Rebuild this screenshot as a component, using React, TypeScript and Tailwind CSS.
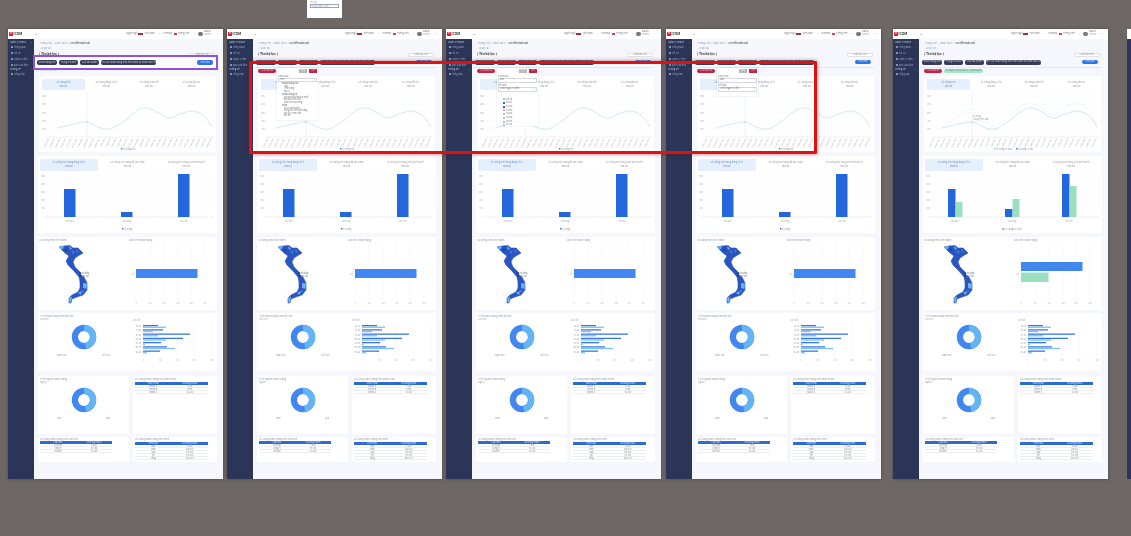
import React from "react";

type FrameKind = "outline" | "list" | "checks" | "selects" | "compare";

const dates = Array.from({ length: 30 }, (_, i) => `${String(i + 1).padStart(2, "0")}/06/2024`);

function smooth(pts: number[][]) {
  let d = `M${pts[0][0]} ${pts[0][1]}`;
  for (let i = 0; i < pts.length - 1; i++) {
    const p0 = pts[Math.max(0, i - 1)];
    const p1 = pts[i];
    const p2 = pts[i + 1];
    const p3 = pts[Math.min(pts.length - 1, i + 2)];
    d += ` C${p1[0] + (p2[0] - p0[0]) / 6} ${p1[1] + (p2[1] - p0[1]) / 6} ${p2[0] - (p3[0] - p1[0]) / 6} ${p2[1] - (p3[1] - p1[1]) / 6} ${p2[0]} ${p2[1]}`;
  }
  return d;
}

const lineA = [[57, 128], [72, 124.5], [87, 122], [98, 127], [110, 129], [124, 121], [140, 109], [152, 109.5], [168, 118], [180, 114], [193, 111], [204, 116], [212, 127]];
const lineB = [[57, 128], [72, 117], [87, 110], [98, 120], [110, 126], [124, 116], [140, 104], [152, 105], [168, 115], [180, 107], [193, 103], [204, 110], [212, 126]];

function Chip({ label, w, color = "dark" }: { label: string; w: number; color?: "dark" | "red" | "green" }) {
  const cls =
    color === "dark"
      ? "bg-[#363c56] text-[#c9cedb] h-[5px]"
      : color === "red"
        ? "bg-[#c4213f] text-[#f3c6cf] h-[4px]"
        : "bg-[#a6e4c6] text-[#5a8a78] h-[4px]";
  return (
    <span style={{ width: w }} className={`flex items-center justify-center overflow-hidden whitespace-nowrap rounded-[2px] text-[2.2px] ${cls}`}>
      {label}
    </span>
  );
}

function Header() {
  return (
    <div className="flex h-[10px] shrink-0 items-center bg-white pl-[1px] pr-[5px] text-[2.4px] text-[#777]">
      <span className="flex h-[4px] w-[4px] items-center justify-center rounded-[0.5px] bg-[#d8203c] text-[2.5px] font-bold text-white">V</span>
      <span className="ml-[0.5px] text-[3.2px] font-bold text-[#444]">ICOM</span>
      <span className="ml-[13px] text-[3px]">≡</span>
      <span className="ml-auto">Ngôn ngữ</span>
      <span className="ml-[1px] h-[2.5px] w-[5px] bg-[#a02a4e]" />
      <span className="ml-[1px]">Việt Nam</span>
      <span className="ml-[4px]">⌄</span>
      <span className="ml-[3px]">Internal</span>
      <span className="ml-[2px] h-[2.5px] w-[3px] bg-[#d8405a]" />
      <span className="ml-[1px]">Tiếng Việt</span>
      <span className="ml-[4px]">⌄</span>
      <span className="ml-[3px] h-[4.5px] w-[4.5px] rounded-full bg-[#777]" />
      <div className="ml-[1px] flex flex-col leading-[2.6px]">
        <span>David</span>
        <span className="text-[#aaa]">Admin</span>
      </div>
      <span className="ml-[5px]">⌄</span>
    </div>
  );
}

function Sidebar() {
  const item = "flex items-center gap-[1px] pl-[3px] text-[2.4px] leading-[3px] text-[#9aa4c0] whitespace-nowrap";
  const dot = <span className="h-[2px] w-[2px] shrink-0 rounded-[0.5px] border-[0.3px] border-[#8f9ab8]" />;
  return (
    <div className="flex w-[26px] shrink-0 flex-col bg-[#2a3558] pt-[2px]">
      <div className="flex items-center justify-between pl-[2px] pr-[2px] text-[2.4px] leading-[3px] text-[#bcc4d8] whitespace-nowrap">
        <span>Quản lý khách</span><span>⌄</span>
      </div>
      <div className={`${item} mt-[1.5px]`}>{dot}Tổng quan</div>
      <div className={`${item} mt-[3px]`}>{dot}Hồ sơ</div>
      <div className={`${item} mt-[3px]`}>{dot}Quản lý đơn</div>
      <div className={`${item} mt-[3px]`}>{dot}Báo cáo đơn</div>
      <div className="mt-[1px] flex items-center justify-between pl-[2px] pr-[2px] text-[2.4px] leading-[3px] text-[#bcc4d8]">
        <span>Thống kê</span><span>⌄</span>
      </div>
      <div className={`${item} mt-[2px]`}>{dot}Tổng hợp</div>
    </div>
  );
}

function Tab({ active, top, value }: { active?: boolean; top: string; value: string }) {
  return (
    <div className={`flex flex-col items-center justify-center rounded-[1px] text-center text-[2.3px] leading-[3.6px] ${active ? "bg-[#e6effc] text-[#6f95d6]" : "text-[#9a9da6]"}`}>
      <span className="whitespace-nowrap">{top}</span>
      <span className="font-semibold">{value}</span>
    </div>
  );
}

function LineChart({ compare }: { compare: boolean }) {
  const gy = [96, 104.5, 113, 121, 129];
  return (
    <svg viewBox="39 90 177 62" className="block h-[62px] w-[177px]">
      {gy.map((y, i) => (
        <g key={y}>
          <line x1="47" x2="214" y1={y} y2={y} stroke="#f3f4f6" strokeWidth="0.4" />
          <text x="44" y={y + 0.7} fontSize="2" textAnchor="middle" fill="#aaa">{500 - i * 100}</text>
        </g>
      ))}
      <line x1="47" x2="214" y1="137" y2="137" stroke="#d8dbe2" strokeWidth="0.4" />
      {dates.map((d, i) => {
        const x = 49 + i * 5.6;
        return (
          <g key={d}>
            <line x1={x} x2={x} y1="137" y2="138" stroke="#ccc" strokeWidth="0.3" />
            <text x={x} y="139" fontSize="1.7" fill="#a5a8af" textAnchor="end" transform={`rotate(-65 ${x} 139)`}>{d}</text>
          </g>
        );
      })}
      <line x1="87" x2="87" y1="92" y2="137" stroke="#c5cad3" strokeWidth="0.4" strokeDasharray="1 0.8" />
      {compare && <path d={smooth(lineB)} fill="none" stroke="#dcecf2" strokeWidth="0.5" />}
      <path d={smooth(lineA)} fill="none" stroke="#b3d8e8" strokeWidth="0.6" />
      <circle cx="87" cy="122" r="0.8" fill="#b3d0e2" />
      {compare ? (
        <>
          <text x="88" y="117" fontSize="1.9" fill="#999">Số lượng</text>
          <text x="88" y="120" fontSize="1.9" fill="#999">Tháng trước</text>
          <text x="100" y="120" fontSize="1.9" fill="#777">100</text>
          <rect x="109" y="148" width="1.4" height="1.4" fill="#7fcfae" />
          <text x="111" y="149.5" fontSize="2" fill="#999">Số lượng kỳ trước</text>
          <rect x="131" y="148" width="1.4" height="1.4" fill="#2467dc" />
          <text x="133" y="149.5" fontSize="2" fill="#999">Số lượng kỳ này</text>
        </>
      ) : (
        <>
          <rect x="121" y="148" width="1.4" height="1.4" fill="#2c8fa8" />
          <text x="123" y="149.5" fontSize="2" fill="#999">Số lượng mới</text>
        </>
      )}
    </svg>
  );
}

function ColumnChart({ compare }: { compare: boolean }) {
  const gy = [176, 184, 192, 200, 208];
  const bars = [
    { x: 64, top: 189, gTop: 202, label: "Chờ xử lý" },
    { x: 121, top: compare ? 209 : 212, gTop: 199, label: "Đã xong" },
    { x: 178, top: 174, gTop: 186, label: "Hủy bỏ" },
  ];
  return (
    <svg viewBox="38 171 179 62" className="block h-[62px] w-[179px]">
      {gy.map((y, i) => (
        <g key={y}>
          <line x1="46" x2="214" y1={y} y2={y} stroke="#f3f4f6" strokeWidth="0.4" />
          <text x="43" y={y + 0.7} fontSize="2" fill="#aaa" textAnchor="middle">{500 - i * 100}</text>
        </g>
      ))}
      <line x1="44" x2="214" y1="217" y2="217" stroke="#d8dbe2" strokeWidth="0.4" />
      {Array.from({ length: 31 }, (_, i) => (
        <line key={i} x1={44 + i * 5.6} x2={44 + i * 5.6} y1="217" y2="218" stroke="#d5d5d5" strokeWidth="0.3" />
      ))}
      {bars.map((b) => (
        <g key={b.x}>
          {compare ? (
            <>
              <rect x={b.x - 1} y={b.top} width="7.5" height={217 - b.top} fill="#2467dc" />
              <rect x={b.x + 6.5} y={b.gTop} width="7" height={217 - b.gTop} fill="#9adfc0" />
            </>
          ) : (
            <rect x={b.x} y={b.top} width="11.5" height={217 - b.top} fill="#2467dc" />
          )}
          <text x={b.x + 6} y="222" fontSize="2" fill="#a0a3aa" textAnchor="middle">{b.label}</text>
        </g>
      ))}
      {compare ? (
        <text x="127" y="230" fontSize="2" fill="#999" textAnchor="middle">■ Kỳ này  ■ Kỳ trước</text>
      ) : (
        <>
          <rect x="122" y="228" width="1.4" height="1.4" fill="#2467dc" />
          <text x="124" y="229.5" fontSize="2" fill="#999">Số lượng</text>
        </>
      )}
    </svg>
  );
}

function VietnamMap() {
  const outline =
    "59,248 64,247 70,246.5 73,249 78,249 83,254 78,257 75,259 73,263 75,268 80,273 81,276 84,278 87,284 87,291 83,296 77,298 72,300 71,304 69,304 69,299 72,296 78,293 80,289 80,283 79,278 74,272 68,266 66,262 69,257 65,254";
  return (
    <svg viewBox="55 243 45 66" className="block h-[66px] w-[45px]">
      <polygon points={outline} fill="#2a55c0" stroke="#2a55c0" strokeWidth="0.6" />
      <polygon points="59,248 64,247 63,250 60,250" fill="#6bb0f0" />
      <polygon points="69,247 72,249.5 70,251" fill="#6bb0f0" />
      <polygon points="76,250 79,252 77,254" fill="#3f78de" />
      <polygon points="83,284 87,284.5 86.5,290 83,289" fill="#6bb0f0" />
      <polygon points="69,299 72,297.5 71,304 69.5,303.5" fill="#6bb0f0" />
      <polygon points="78,294 82,292 81,296" fill="#6bb0f0" />
      <circle cx="66" cy="251" r="1.2" fill="#1d43a6" />
      <circle cx="73" cy="253" r="1.4" fill="#3f78de" />
      <circle cx="83" cy="292" r="1.2" fill="#3f78de" />
      <rect x="79.5" y="273.5" width="1.4" height="1.4" fill="#1a2540" />
      <rect x="79.5" y="276" width="1.4" height="1.4" fill="#1a2540" />
      <text x="81.5" y="275" fontSize="1.9" fill="#777">Đà Nẵng</text>
      <text x="81.5" y="277.5" fontSize="1.9" fill="#777">Huế 100</text>
      <text x="66" y="298" fontSize="1.9" fill="#ccc" textAnchor="end">0</text>
    </svg>
  );
}

function HBarChart({ compare }: { compare: boolean }) {
  const xs = [136, 150, 164, 178, 191, 205];
  return (
    <svg viewBox="127 245 88 65" className="block h-[65px] w-[88px]">
      {xs.map((x, i) => (
        <g key={x}>
          <line x1={x} x2={x} y1="245" y2="304" stroke="#f0f1f4" strokeWidth="0.4" />
          <text x={x} y="307" fontSize="1.9" fill="#bbb" textAnchor="middle">{i * 100}</text>
        </g>
      ))}
      {compare ? (
        <>
          <rect x="136" y="265" width="61.5" height="9" fill="#4287f0" />
          <rect x="136" y="275.5" width="27.5" height="9.5" fill="#9adfc0" />
        </>
      ) : (
        <rect x="136" y="272" width="61.5" height="9" fill="#4287f0" />
      )}
      <text x="134" y="277" fontSize="1.9" fill="#999" textAnchor="end" transform="rotate(-30 134 277)">HN</text>
    </svg>
  );
}

function Donut({ legend }: { legend: [string, string] }) {
  return (
    <div className="relative flex flex-1 flex-col items-center">
      <svg viewBox="0 0 26 26" className="mt-[3px] block h-[26px] w-[26px]">
        <circle cx="13" cy="13" r="9.1" fill="none" stroke="#4287f0" strokeWidth="6.3" />
        <circle cx="13" cy="13" r="9.1" fill="none" stroke="#64b5f6" strokeWidth="6.3" pathLength="100" strokeDasharray="47 53" transform="rotate(-90 13 13)" />
      </svg>
      <div className="mt-[4px] flex w-full justify-between px-[19px] text-[2.2px] text-[#999]">
        <span>{legend[0]}</span>
        <span>{legend[1]}</span>
      </div>
    </div>
  );
}

function AgeBars() {
  const rows = [
    ["18-24", 15, 23], ["25-30", 20, 10], ["31-35", 47, 15], ["36-40", 40, 23], ["41-45", 18, 2], ["46-50", 24, 32], ["50-60", 17, 4],
  ] as [string, number, number][];
  return (
    <svg viewBox="130 326 85 44" className="block h-[44px] w-[85px]">
      {[143, 160, 177, 194, 212].map((x, i) => (
        <g key={x}>
          <line x1={x} x2={x} y1="327" y2="363" stroke="#f0f1f4" strokeWidth="0.4" />
          <text x={x} y="364.5" fontSize="1.9" fill="#bbb" textAnchor="middle">{i * 100}</text>
        </g>
      ))}
      {rows.map(([label, a, b], i) => {
        const y = 329 + i * 4.25;
        return (
          <g key={label}>
            <rect x="143" y={y} width={a} height="1.3" fill="#3a78e0" />
            <rect x="143" y={y + 1.6} width={b} height="1.3" fill="#7cc0f4" />
            <text x="141" y={y + 2} fontSize="1.9" fill="#999" textAnchor="end">{label}</text>
          </g>
        );
      })}
    </svg>
  );
}

function DataTable({ width, head, rows }: { width: number; head: [string, string]; rows: [string, string][] }) {
  return (
    <div style={{ width }} className="flex flex-col text-[2.1px] text-[#888]">
      <div className="grid h-[3px] grid-cols-2 items-center rounded-[0.5px] bg-[#2d6bd4] text-center leading-[3px] text-[#cfe0fa]">
        <span>{head[0]}</span>
        <span>{head[1]}</span>
      </div>
      {rows.map((r, i) => (
        <div key={i} className="grid h-[3px] grid-cols-2 items-center border-b-[0.25px] border-[#eceef2] text-center leading-[3px]">
          <span>{r[0]}</span>
          <span>{r[1]}</span>
        </div>
      ))}
    </div>
  );
}

function Popover({ kind }: { kind: FrameKind }) {
  const left = kind === "list" ? "left-[50px]" : "left-[51px]";
  return (
    <div className={`absolute top-[39px] ${left} z-10 flex w-[41px] flex-col bg-white px-[1px] pt-[1px] pb-[1px] text-[2.3px] text-[#777] shadow-[0_0_1.5px_rgba(60,70,100,0.18)]`}>
      <div className="flex justify-end gap-[2px]">
        <span className="flex h-[4px] w-[8px] items-center justify-center rounded-[0.5px] bg-[#b5b8bf] text-[#eee]">Hủy</span>
        <span className="flex h-[4px] w-[8px] items-center justify-center rounded-[0.5px] bg-[#c4213f] text-[#f3c6cf]">Lọc</span>
      </div>
      {kind === "list" ? (
        <>
          <span className="mt-[1.5px] leading-[3px]">Chọn loại</span>
          <div className="mt-[0.5px] flex h-[3.5px] items-center justify-between border-[0.25px] border-[#d5d8df] px-[1px] leading-[3px]"><span>Tìm</span><span>⌄</span></div>
          <div className="mt-[1.5px] flex h-[36px] flex-col pl-[3px] text-[2.1px] leading-[2.5px] whitespace-nowrap text-[#777]">
            <span className="font-semibold pl-[1px]">Khách hàng mới</span>
            <span className="pl-[3px]">Mới</span>
            <span className="pl-[3px]">Tiềm năng</span>
            <span className="pl-[3px]">Đã có</span>
            <span className="mt-[1px] font-semibold pl-[1px]">Khách hàng cũ</span>
            <span className="pl-[3px]">Đã mua một lần duy nhất</span>
            <span className="pl-[3px]">Đã mua nhiều lần</span>
            <span className="pl-[3px]">Quay lại mua hàng</span>
            <span className="mt-[1px] font-semibold pl-[1px]">Khác</span>
            <span className="pl-[3px]">Đại lý phân phối</span>
            <span className="pl-[3px]">Cộng tác viên bán hàng</span>
            <span className="pl-[3px]">Đối tác chiến lược</span>
            <span className="pl-[3px]">Nội bộ</span>
          </div>
        </>
      ) : (
        <>
          <span className="mt-[1.5px] leading-[3px]">Chọn loại</span>
          <div className="flex h-[5px] items-center justify-between border-[0.25px] border-[#d5d8df] px-[1px]"><span>Mới</span><span>⌄</span></div>
          <span className="mt-[1px] leading-[3px]">Kết quả</span>
          <div className="flex h-[5px] items-center justify-between border-[0.25px] border-[#d5d8df] px-[1px]"><span>Chọn ngày từ đến</span><span>⌄</span></div>
          {kind === "checks" ? (
            <div className="mt-[6px] mb-[1px] flex h-[26px] flex-col pl-[5px] text-[2.2px] leading-[3.7px]">
              {["Tất cả", "01/06", "02/06", "03/06", "04/06", "05/06", "06/06", "07/06"].map((d, i) => (
                <span key={d} className="flex items-center gap-[1px]">
                  <span className={`h-[2px] w-[2px] rounded-[0.3px] border-[0.25px] ${i > 0 && i < 3 ? "border-[#2467dc] bg-[#2467dc]" : "border-[#bbb] bg-white"}`} />
                  {d}
                </span>
              ))}
            </div>
          ) : (
            <div className="h-[3px]" />
          )}
        </>
      )}
    </div>
  );
}

function Frame({ kind, x }: { kind: FrameKind; x: number }) {
  const compare = kind === "compare";
  const outlined = kind === "outline";
  const chips = ["Khách hàng mới", "Trạng thái đơn", "Loại sản phẩm", "Khu vực khách hàng theo tỉnh thành và nhóm dịch vụ"];
  const widths = [20, 19, 19, 55];
  return (
    <div style={{ left: x }} className="absolute top-[29px] flex h-[450px] w-[215px] flex-col bg-[#f5f7fd] shadow-[0_0_3px_rgba(40,40,40,0.45)] blur-[0.3px]">
      <Header />
      <div className="flex min-h-0 flex-1">
        <Sidebar />
        <div className="flex min-w-0 flex-1 flex-col pl-[4px] pr-[5px]">
          <div className="mt-[3px] flex h-[4px] items-center gap-[1px] pl-[2px] text-[2.5px] whitespace-nowrap text-[#a0a3aa]">
            <span>Trang chủ</span><span>›</span><span>Danh sách</span><span>›</span>
            <span className="font-semibold text-[#555]">Chi tiết khảo sát</span>
          </div>
          <div className="mt-[1px] h-[4px] pl-[2px] text-[2.4px] leading-[4px] text-[#7fa3dc]">‹ Quay lại</div>
          <div className="mt-[1px] flex h-[5px] items-center justify-between pl-[1px] pr-[3px]">
            <span className="text-[3.2px] font-bold text-[#333]">[ Tên bộ lọc ]</span>
            <span className="flex h-[4px] w-[26px] items-center justify-center rounded-[1px] border-[0.25px] border-[#e0e2e8] bg-white text-[2.2px] text-[#999]">Xuất báo cáo</span>
          </div>
          <div className={`-ml-[3px] flex h-[11px] w-[181px] shrink-0 items-center pl-[2px] pr-[3px] ${outlined ? "bg-white outline-2 outline-[#9050e0]" : "border-b-[0.25px] border-[#e3e6ee]"}`}>
            <div className="flex items-center gap-[2px]">
              {chips.map((c, i) => (
                <Chip key={c} label={c} w={widths[i]} />
              ))}
            </div>
            <span className="ml-auto flex h-[4.5px] w-[16px] items-center justify-center rounded-[2px] bg-[#2f74e6] text-[2.2px] text-[#cfe0fa]">Tìm kiếm</span>
          </div>
          <div className="flex h-[6px] shrink-0 items-start gap-[2px] pl-[1px] pt-[0.5px]">
            {outlined ? (
              <span className="pl-[1px] pt-[0.5px] text-[2.4px] text-[#999]">+ Thêm bộ lọc</span>
            ) : (
              <>
                <Chip label="+ Lưu bộ lọc" w={18} color="red" />
                {compare && <Chip label="Kỳ trước: 01/05/2024 - 31/05/2024" w={39} color="green" />}
              </>
            )}
          </div>
          <section className="mx-[1px] mt-[2px] h-[76px] w-[177px] shrink-0 bg-white pt-[3px]">
            <div className="mx-[3px] grid h-[11px] grid-cols-4">
              <Tab active top="Số lượng mới" value="100.00" />
              <Tab top="Số lượng đang xử lý" value="100.00" />
              <Tab top="Số lượng hoàn tất" value="100.00" />
              <Tab top="Số lượng đã hủy" value="100.00" />
            </div>
            <LineChart compare={compare} />
          </section>
          <section className="mt-[4px] h-[77px] w-[179px] shrink-0 bg-white pt-[3px]">
            <div className="mx-[2px] grid h-[12px] grid-cols-3 gap-[1px]">
              <Tab active top="Số lượng tình trạng đang xử lý" value="100.00" />
              <Tab top="Số lượng tình trạng đã xác nhận" value="100.00" />
              <Tab top="Số lượng tình trạng chờ phê duyệt" value="100.00" />
            </div>
            <ColumnChart compare={compare} />
          </section>
          <section className="mt-[4px] flex h-[73px] w-[179px] shrink-0 bg-white">
            <div className="flex w-[91px] flex-col pt-[2px]">
              <span className="pl-[1px] text-[2.4px] leading-[3px] text-[#999]">Số lượng theo tỉnh thành</span>
              <div className="pl-[17px]"><VietnamMap /></div>
            </div>
            <div className="flex flex-1 flex-col pt-[2px]">
              <span className="text-[2.4px] leading-[3px] text-[#999]">Giới tính khách hàng</span>
              <div className="-ml-[2px]"><HBarChart compare={compare} /></div>
            </div>
          </section>
          <section className="mt-[3px] flex h-[58px] w-[179px] shrink-0 bg-white">
            <div className="flex w-[92px] flex-col pt-[2px] pl-[2px]">
              <span className="text-[2.4px] leading-[3px] text-[#999]">Tỷ lệ khách hàng theo độ tuổi</span>
              <span className="text-[2.2px] leading-[3px] text-[#aaa]">Giới tính</span>
              <div className="-ml-[2px] flex flex-1"><Donut legend={["Nam 50%", "Nữ 50%"]} /></div>
            </div>
            <div className="flex flex-1 flex-col pt-[6px]">
              <span className="pl-[3px] text-[2.2px] leading-[3px] text-[#aaa]">Độ tuổi</span>
              <AgeBars />
            </div>
          </section>
          <div className="mt-[5px] flex h-[58px] shrink-0 gap-[4px]">
            <section className="flex w-[91px] flex-col bg-white pt-[2px] pl-[2px]">
              <span className="text-[2.4px] leading-[3px] text-[#999]">Tỷ lệ nguồn khách hàng</span>
              <span className="text-[2.2px] leading-[3px] text-[#aaa]">Nguồn</span>
              <div className="-ml-[2px] flex flex-1"><Donut legend={["Web", "App"]} /></div>
            </section>
            <section className="flex w-[84px] flex-col bg-white pt-[2px] pl-[2px]">
              <span className="text-[2.3px] leading-[3px] text-[#999]">Số lượng khách hàng theo phân nhóm</span>
              <div className="mt-[1px]">
                <DataTable width={73} head={["Phân nhóm", "Số lượng khách"]} rows={[["Nhóm A", "1.200"], ["Nhóm B", "7.950"], ["Nhóm C", "14.200"]]} />
              </div>
            </section>
          </div>
          <div className="mt-[3px] flex h-[25px] shrink-0 gap-[4px]">
            <section className="flex w-[91px] flex-col bg-white pt-[1px] pl-[2px]">
              <span className="text-[2.3px] leading-[3px] text-[#999]">Số lượng khách hàng theo loại hình</span>
              <DataTable width={72} head={["Loại hình", "Số lượng khách"]} rows={[["Cá nhân", "1.800"], ["Công ty", "57.200"], ["Hộ kinh", "15.200"]]} />
            </section>
            <section className="flex w-[84px] flex-col bg-white pt-[1px] pl-[2px]">
              <span className="text-[2.3px] leading-[3px] text-[#999]">Số lượng khách hàng theo kênh</span>
              <div className="mt-[1px]">
                <DataTable width={73} head={["Kênh bán", "Số lượng khách"]} rows={[["Zalo", "3.500"], ["Web", "300.120"], ["App", "85.750"], ["Fb", "53.750"], ["Tổng", "443.977"]]} />
              </div>
            </section>
          </div>
        </div>
      </div>
      {(kind === "list" || kind === "checks" || kind === "selects") && <Popover kind={kind} />}
    </div>
  );
}

export default function App() {
  return (
    <div className="relative h-[536px] w-[1131px] overflow-hidden bg-[#6d6766] font-['Inter',sans-serif]">
      <div className="absolute left-[307px] top-0 flex h-[18px] w-[35px] flex-col bg-white px-[3px] text-[2px] text-[#aaa] blur-[0.3px]">
        <span className="leading-[4px]">Kết quả</span>
        <span className="flex h-[4px] items-center border-[0.25px] border-[#9aa3b5] pl-[1px] leading-[3px]">Chọn ngày từ đến</span>
      </div>
      <Frame kind="outline" x={8} />
      <Frame kind="list" x={227} />
      <Frame kind="checks" x={446} />
      <Frame kind="selects" x={666} />
      <Frame kind="compare" x={893} />
      <div className="absolute left-[1127px] top-[29px] flex h-[450px] w-[4px] flex-col">
        <div className="h-[10px] bg-white" />
        <div className="flex-1 bg-[#2a3558]" />
      </div>
      <span className="absolute left-[881px] top-[245px] text-[2.4px] text-[#bbb]">...</span>
      <div className="absolute left-[249px] top-[61px] z-20 h-[93px] w-[568px] rounded-[1px] border-[3px] border-[#dd1313] shadow-[0_0_4px_rgba(120,0,0,0.5)]" />
    </div>
  );
}
